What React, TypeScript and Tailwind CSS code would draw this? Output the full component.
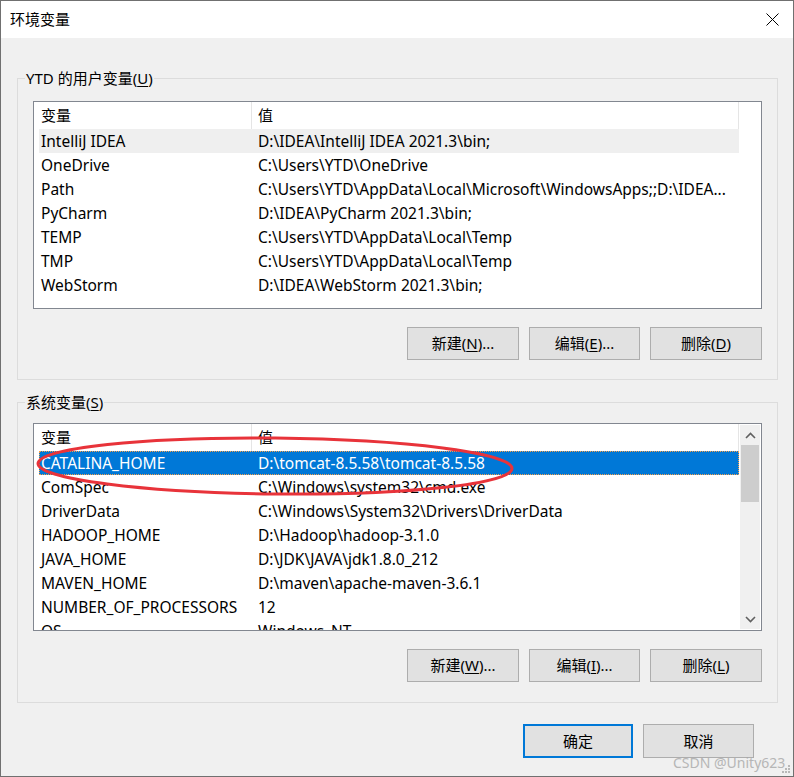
import React from "react";

type Row = { name: string; value: string };

const userVars: Row[] = [
  { name: "IntelliJ IDEA", value: "D:\\IDEA\\IntelliJ IDEA 2021.3\\bin;" },
  { name: "OneDrive", value: "C:\\Users\\YTD\\OneDrive" },
  { name: "Path", value: "C:\\Users\\YTD\\AppData\\Local\\Microsoft\\WindowsApps;;D:\\IDEA..." },
  { name: "PyCharm", value: "D:\\IDEA\\PyCharm 2021.3\\bin;" },
  { name: "TEMP", value: "C:\\Users\\YTD\\AppData\\Local\\Temp" },
  { name: "TMP", value: "C:\\Users\\YTD\\AppData\\Local\\Temp" },
  { name: "WebStorm", value: "D:\\IDEA\\WebStorm 2021.3\\bin;" },
];

const sysVars: Row[] = [
  { name: "CATALINA_HOME", value: "D:\\tomcat-8.5.58\\tomcat-8.5.58" },
  { name: "ComSpec", value: "C:\\Windows\\system32\\cmd.exe" },
  { name: "DriverData", value: "C:\\Windows\\System32\\Drivers\\DriverData" },
  { name: "HADOOP_HOME", value: "D:\\Hadoop\\hadoop-3.1.0" },
  { name: "JAVA_HOME", value: "D:\\JDK\\JAVA\\jdk1.8.0_212" },
  { name: "MAVEN_HOME", value: "D:\\maven\\apache-maven-3.6.1" },
  { name: "NUMBER_OF_PROCESSORS", value: "12" },
  { name: "OS", value: "Windows_NT" },
];

function VarList({ rows, hover, selected, scroll }: { rows: Row[]; hover?: number; selected?: number; scroll?: boolean }) {
  return (
    <div className="flex w-[729px] h-[208px] border border-[#828790] bg-white overflow-hidden">
      <div className="w-[705px] flex flex-col overflow-hidden">
        <div className="flex h-[27px] shrink-0 leading-[26px]">
          <div className="w-[218px] pl-[7px] border-r border-[#e5e5e5]">变量</div>
          <div className="flex-1 pl-[6px] border-r border-[#e5e5e5]">值</div>
        </div>
        {rows.map((r, i) => {
          const isSel = i === selected;
          const isHover = i === hover;
          return (
            <div
              key={r.name}
              className={
                "flex shrink-0 ml-[5px] w-[700px] h-[24px] leading-[23px] whitespace-nowrap text-[15.5px] " +
                (isSel
                  ? "bg-[#0078d7] text-white border border-dotted border-[#f5a04a]"
                  : isHover
                  ? "bg-[#efefef] border border-transparent"
                  : "border border-transparent")
              }
            >
              <div className="w-[218px] pl-[1px]">{r.name}</div>
              <div className="flex-1">{r.value}</div>
            </div>
          );
        })}
      </div>
      <div className="w-[22px] p-[1px] flex">
        {scroll && (
          <div className="flex-1 flex flex-col bg-[#f0f0f0]">
            <div className="h-[20px] flex items-center justify-center">
              <svg width="11" height="7" viewBox="0 0 11 7">
                <path d="M1 6 L5.5 1.5 L10 6" fill="none" stroke="#606060" strokeWidth="1.6" />
              </svg>
            </div>
            <div className="h-[57px] mx-[1px] bg-[#cdcdcd]" />
            <div className="flex-1" />
            <div className="h-[20px] flex items-center justify-center">
              <svg width="11" height="7" viewBox="0 0 11 7">
                <path d="M1 1 L5.5 5.5 L10 1" fill="none" stroke="#606060" strokeWidth="1.6" />
              </svg>
            </div>
          </div>
        )}
      </div>
    </div>
  );
}

function Buttons({ keys }: { keys: string[] }) {
  return (
    <div className="flex justify-end gap-[10px] mt-[18px] h-[33px]">
      <div className="flex w-[112px] h-[33px] items-center justify-center bg-[#e1e1e1] border border-[#adadad]">
        新建(<span className="underline underline-offset-2">{keys[0]}</span>)...
      </div>
      <div className="flex w-[111px] h-[33px] items-center justify-center bg-[#e1e1e1] border border-[#adadad]">
        编辑(<span className="underline underline-offset-2">{keys[1]}</span>)...
      </div>
      <div className="flex w-[112px] h-[33px] items-center justify-center bg-[#e1e1e1] border border-[#adadad]">
        删除(<span className="underline underline-offset-2">{keys[2]}</span>)
      </div>
    </div>
  );
}

export default function App() {
  return (
    <div
      className="relative w-[794px] h-[777px] border border-[#707070] bg-[#f0f0f0] flex flex-col text-[15px] text-black overflow-hidden"
      style={{ fontFamily: '"Noto Sans", "Noto Sans CJK SC", sans-serif' }}
    >
      {/* title bar */}
      <div className="h-[37px] bg-white flex items-center justify-between pl-[9px] pr-[14px] shrink-0">
        <span>环境变量</span>
        <svg width="13" height="13" viewBox="0 0 13 13">
          <path d="M0.5 0.5 L12.5 12.5 M12.5 0.5 L0.5 12.5" stroke="#000" strokeWidth="1" />
        </svg>
      </div>

      {/* user vars */}
      <div className="relative ml-[16px] mt-[40px] w-[761px] border border-[#dcdcdc] px-[15px] pt-[22px] pb-[19px]">
        <span className="absolute left-[7px] top-[-11px] px-[1px] leading-[20px] bg-[#f0f0f0]">
          YTD 的用户变量(<span className="underline underline-offset-2">U</span>)
        </span>
        <VarList rows={userVars} hover={0} />
        <Buttons keys={["N", "E", "D"]} />
      </div>

      {/* system vars */}
      <div className="relative ml-[16px] mt-[22px] w-[761px] border border-[#dcdcdc] px-[15px] pt-[20px] pb-[20px]">
        <span className="absolute left-[7px] top-[-11px] px-[1px] leading-[20px] bg-[#f0f0f0]">
          系统变量(<span className="underline underline-offset-2">S</span>)
        </span>
        <VarList rows={sysVars} selected={0} scroll />
        <Buttons keys={["W", "I", "L"]} />
      </div>

      {/* ok / cancel */}
      <div className="flex justify-end gap-[10px] mt-[21px] pr-[39px]">
        <div className="flex w-[110px] h-[34px] items-center justify-center bg-[#e1e1e1] border-2 border-[#0078d7]">确定</div>
        <div className="flex w-[111px] h-[34px] items-center justify-center bg-[#e1e1e1] border border-[#adadad]">取消</div>
      </div>

      {/* red annotation ellipse */}
      <svg className="absolute left-0 top-0 pointer-events-none" width="794" height="777">
        <ellipse cx="274" cy="465" rx="237" ry="28" transform="rotate(0.6 274 465)" fill="none" stroke="#e8333a" strokeWidth="3" />
      </svg>

      {/* watermark */}
      <span className="absolute left-[672px] top-[751px] text-[14px] text-[#a8a8a8] opacity-80">CSDN @Unity623</span>

      {/* resize grip */}
      <svg className="absolute right-[2px] bottom-[2px]" width="10" height="10" viewBox="0 0 10 10">
        <rect x="7" y="1" width="2" height="2" fill="#b8b8b8" />
        <rect x="4" y="4" width="2" height="2" fill="#b8b8b8" />
        <rect x="7" y="4" width="2" height="2" fill="#b8b8b8" />
        <rect x="1" y="7" width="2" height="2" fill="#b8b8b8" />
        <rect x="4" y="7" width="2" height="2" fill="#b8b8b8" />
        <rect x="7" y="7" width="2" height="2" fill="#b8b8b8" />
      </svg>
    </div>
  );
}
